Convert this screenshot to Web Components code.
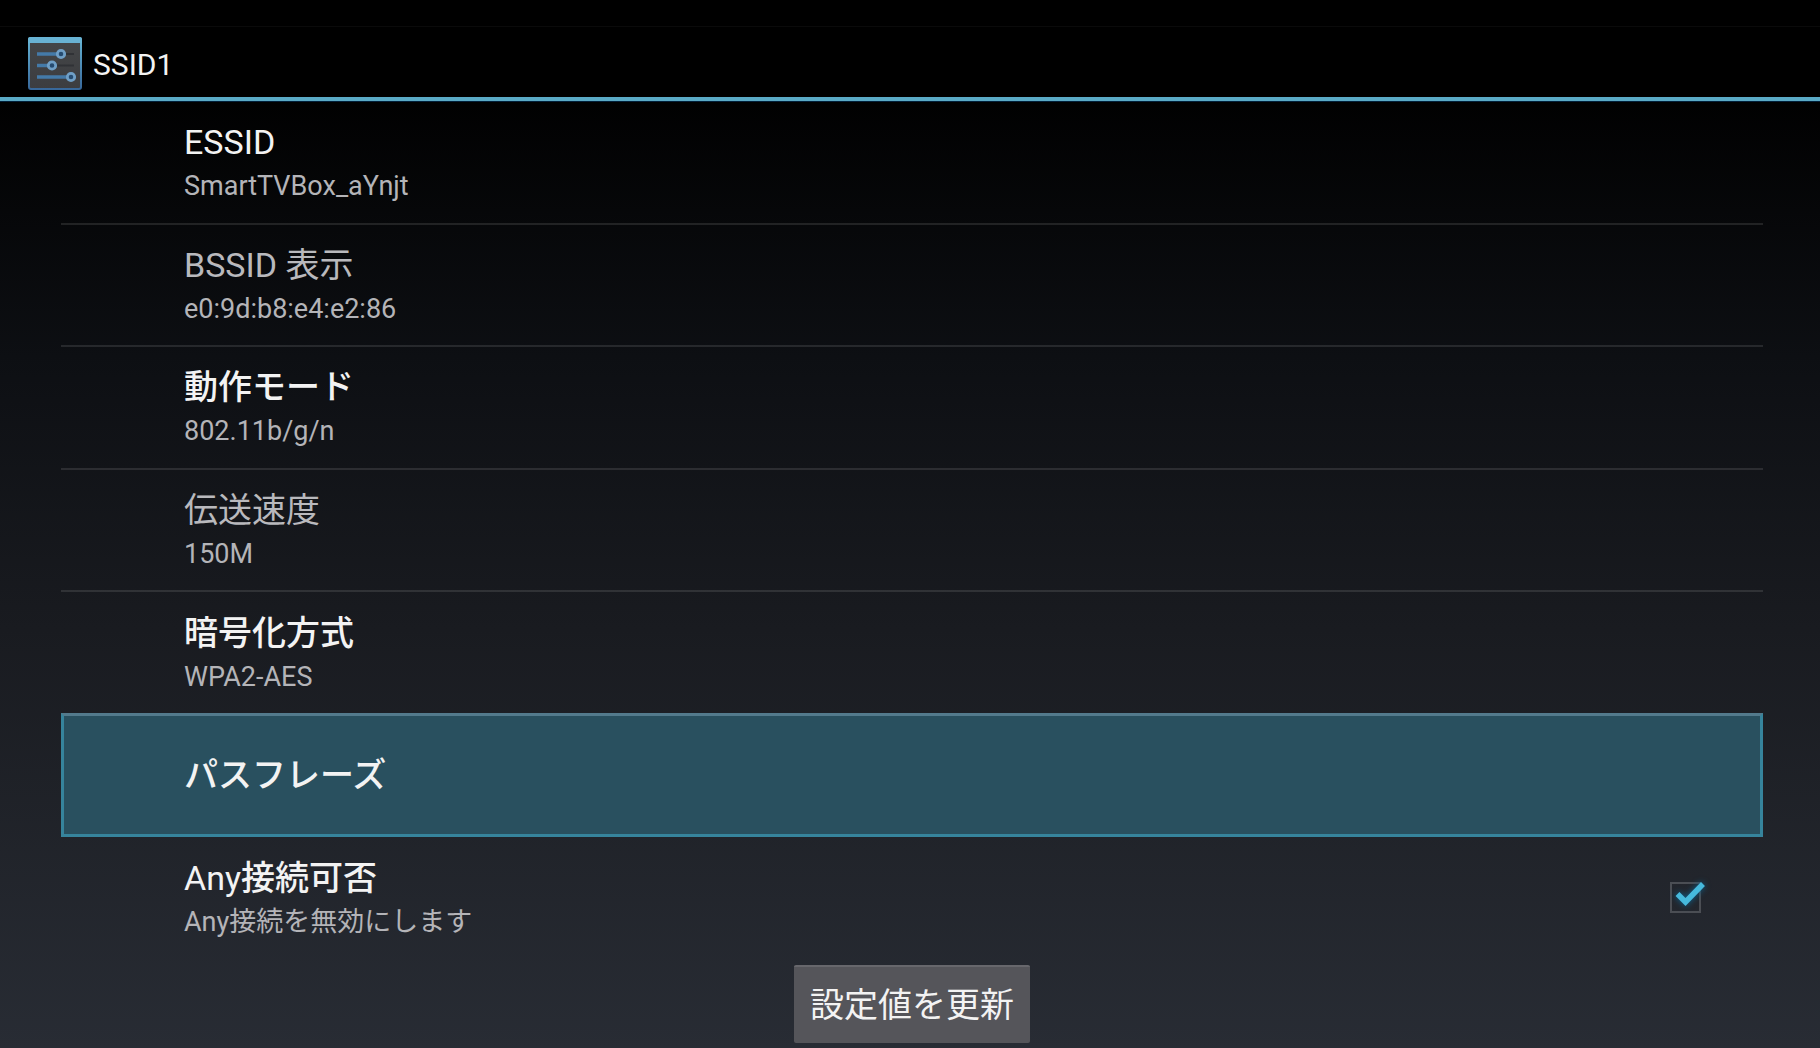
<!DOCTYPE html>
<html lang="ja">
<head>
<meta charset="UTF-8">
<meta name="viewport" content="width=device-width, initial-scale=1">
<title>SSID1</title>
<style>
  body {
    margin: 0;
    background: #000;
    font-family: Roboto, "Noto Sans CJK JP", sans-serif;
    color: #f3f3f3;
  }
</style>
</head>
<body>
<settings-screen>
  <screen-header slot="header">SSID1</screen-header>
  <setting-row>ESSID<span slot="summary">SmartTVBox_aYnjt</span></setting-row>
  <setting-row disabled>BSSID 表示<span slot="summary">e0:9d:b8:e4:e2:86</span></setting-row>
  <setting-row>動作モード<span slot="summary">802.11b/g/n</span></setting-row>
  <setting-row disabled>伝送速度<span slot="summary">150M</span></setting-row>
  <setting-row>暗号化方式<span slot="summary">WPA2-AES</span></setting-row>
  <setting-row selected>パスフレーズ</setting-row>
  <setting-check checked>Any接続可否<span slot="summary">Any接続を無効にします</span></setting-check>
  <update-button slot="footer">設定値を更新</update-button>
</settings-screen>

<script>
// 行の共通スタイル
const rowStyle = `
  :host {
    display: flex;
    min-width: 0;
    box-sizing: border-box;
    border-bottom: 2px solid rgba(255, 255, 255, 0.11);
  }

  .row {
    flex: 1;
    display: flex;
    align-items: center;
    margin: 0;
    padding: 0 62px 0 123px;
    border: 0;
    background: none;
    color: inherit;
    font: inherit;
    text-align: left;
  }

  .texts {
    flex: 1;
    display: flex;
    flex-direction: column;
  }

  .title {
    font-family: Roboto, "Noto Sans CJK JP Medium", "Noto Sans CJK JP", sans-serif;
    font-size: 34px;
    line-height: 48px;
  }

  .summary {
    font-size: 27px;
    line-height: 40px;
    color: #b4b4b8;
  }
`;

/**
 * 画面全体のレイアウト
 */
class SettingsScreen extends HTMLElement {
  constructor() {
    super();
    this.attachShadow({ mode: 'open' });
  }

  connectedCallback() {
    this.shadowRoot.innerHTML = `
      <style>
        :host {
          display: flex;
          flex-direction: column;
          min-height: 100vh;
          background: linear-gradient(#000 8%, #0d0f13 34%, #191b20 60%, #282c34);
        }

        main {
          flex: 1;
          display: flex;
          flex-direction: column;
          padding: 0 57px 0 61px;
        }

        .list {
          flex: 1;
          display: grid;
          grid-auto-rows: minmax(100px, 1fr);
        }

        footer {
          display: flex;
          justify-content: center;
          padding: 5px 0;
        }
      </style>

      <slot name="header"></slot>
      <main>
        <div class="list"><slot></slot></div>
        <footer><slot name="footer"></slot></footer>
      </main>
    `;
  }
}

/**
 * アイコンとタイトルのヘッダー
 */
class ScreenHeader extends HTMLElement {
  constructor() {
    super();
    this.attachShadow({ mode: 'open' });
  }

  connectedCallback() {
    this.shadowRoot.innerHTML = `
      <style>
        :host {
          display: block;
          background: #000;
          border-bottom: 1px solid #02203a;
        }

        .status-bar {
          height: 26px;
          border-bottom: 1px solid #0a0a0a;
        }

        header {
          display: flex;
          align-items: flex-end;
          gap: 11px;
          padding: 10px 28px 7px;
          border-bottom: 4px solid #5aaac6;
        }

        svg {
          display: block;
          width: 54px;
          height: 53px;
        }

        h1 {
          margin: 0;
          font-size: 30px;
          font-weight: 400;
          line-height: 50px;
        }
      </style>

      <div class="status-bar"></div>
      <header>
        <svg viewBox="0 0 54 53" fill="none" aria-hidden="true">
          <defs>
            <linearGradient id="panel" x1="0" y1="0" x2="0" y2="1">
              <stop offset="0" stop-color="#444648"/>
              <stop offset="1" stop-color="#3c3d40"/>
            </linearGradient>
            <linearGradient id="edge" x1="0" y1="0" x2="0" y2="1">
              <stop offset="0" stop-color="#66b5d6"/>
              <stop offset="1" stop-color="#38689a"/>
            </linearGradient>
          </defs>
          <rect x="1" y="1" width="52" height="51" rx="2" fill="url(#panel)" stroke="url(#edge)" stroke-width="2"/>
          <path d="M2 0H52Q54 0 54 2V6H0V2Q0 0 2 0Z" fill="#68b2d3"/>
          <path d="M36 17H46M27 28.500H46" stroke="#303236" stroke-width="2"/>
          <path d="M9 17H29M9 28.500H20M9 40H39" stroke="#447aa8" stroke-width="3.500"/>
          <g fill="#254b70" stroke="#6f9fc6" stroke-width="2.800">
            <circle cx="33" cy="17" r="3.700"/>
            <circle cx="24" cy="28.500" r="3.700"/>
            <circle cx="43" cy="40" r="3.700"/>
          </g>
        </svg>
        <h1><slot></slot></h1>
      </header>
    `;
  }
}

/**
 * タイトルと設定値の行
 */
class SettingRow extends HTMLElement {
  constructor() {
    super();
    this.attachShadow({ mode: 'open' });
  }

  connectedCallback() {
    const disabled = this.hasAttribute('disabled') ? 'disabled' : '';
    this.shadowRoot.innerHTML = `
      <style>
        ${rowStyle}

        :host([disabled]) .title {
          color: #b9b9bd;
          font-family: inherit;
        }

        /* 上の区切り線に重ねる */
        :host([selected]) {
          margin-top: -2px;
          border: 3px solid #36849c;
          border-top-color: #537a8c;
          background: #29505f;
        }

        :host([selected]) .row {
          padding: 0 59px 0 120px;
        }
      </style>

      <button class="row" type="button" ${disabled}>
        <span class="texts">
          <span class="title"><slot></slot></span>
          <span class="summary"><slot name="summary"></slot></span>
        </span>
      </button>
    `;
    // 設定値が無い行はタイトルだけを中央に置く
    if (!this.querySelector('[slot="summary"]')) {
      this.shadowRoot.querySelector('.summary').remove();
    }
  }
}

/**
 * チェックボックス付きの行
 */
class SettingCheck extends HTMLElement {
  constructor() {
    super();
    this.attachShadow({ mode: 'open' });
  }

  connectedCallback() {
    const checked = this.hasAttribute('checked') ? 'checked' : '';
    this.shadowRoot.innerHTML = `
      <style>
        ${rowStyle}

        :host {
          border-bottom-color: transparent;
        }

        .check {
          display: grid;
          width: 31px;
          height: 31px;
        }

        .check > * {
          grid-area: 1 / 1;
        }

        input {
          appearance: none;
          box-sizing: border-box;
          width: 31px;
          height: 31px;
          margin: 0;
          border: 2px solid #4b4e54;
        }

        svg {
          width: 31px;
          height: 31px;
          overflow: visible;
          pointer-events: none;
          filter: drop-shadow(0 0 3px #0b6290);
        }

        input:not(:checked) + svg {
          visibility: hidden;
        }
      </style>

      <label class="row">
        <span class="texts">
          <span class="title"><slot></slot></span>
          <span class="summary"><slot name="summary"></slot></span>
        </span>
        <span class="check">
          <input type="checkbox" ${checked}>
          <svg viewBox="0 0 31 31" fill="none" aria-hidden="true">
            <path d="M7.500 12L15.500 20L33 2" stroke="#46b9dc" stroke-width="5.500"/>
          </svg>
        </span>
      </label>
    `;
  }
}

/**
 * 更新ボタン
 */
class UpdateButton extends HTMLElement {
  constructor() {
    super();
    this.attachShadow({ mode: 'open' });
  }

  connectedCallback() {
    this.shadowRoot.innerHTML = `
      <style>
        :host {
          display: block;
        }

        button {
          display: block;
          box-sizing: border-box;
          height: 78px;
          padding: 0 16px;
          border: 0;
          border-top: 2px solid #67676c;
          border-radius: 2px;
          background: #55555a;
          color: inherit;
          font: inherit;
          font-size: 34px;
          line-height: 48px;
        }
      </style>

      <button type="button"><slot></slot></button>
    `;
  }
}

// カスタム要素として登録
customElements.define('settings-screen', SettingsScreen);
customElements.define('screen-header', ScreenHeader);
customElements.define('setting-row', SettingRow);
customElements.define('setting-check', SettingCheck);
customElements.define('update-button', UpdateButton);
</script>
</body>
</html>
